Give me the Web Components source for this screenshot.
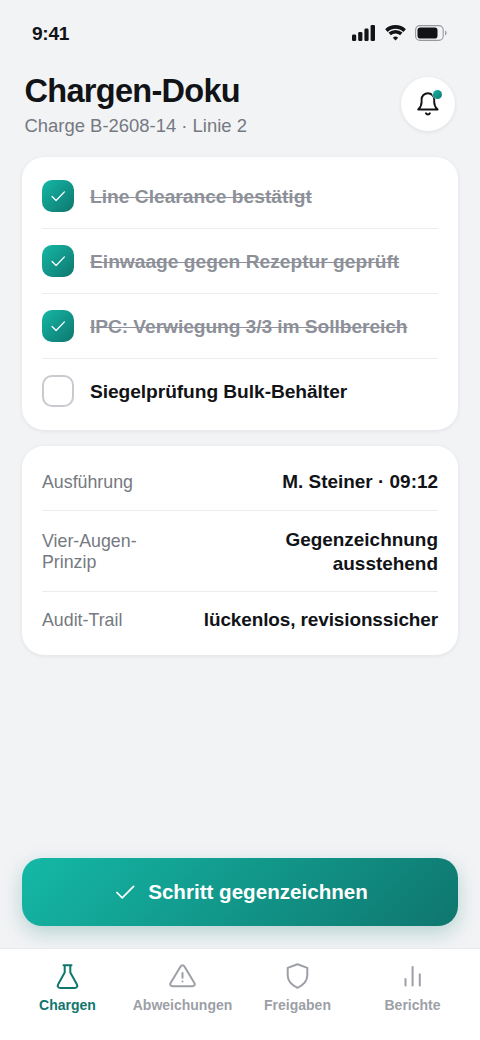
<!DOCTYPE html>
<html lang="de">
<head>
<meta charset="utf-8">
<title>Chargen-Doku</title>
<style>
html,body{margin:0;height:100%}
body{background:#f2f3f5;color:#111317;font-family:"Liberation Sans",Arial,sans-serif;overflow:hidden}
</style>
</head>
<body>
<batch-app></batch-app>
<script>
const define = (name, html) => {
  const t = document.createElement('template');
  t.innerHTML = html;
  customElements.define(name, class extends HTMLElement {
    constructor() {
      super();
      this.attachShadow({ mode: 'open' }).append(t.content.cloneNode(true));
    }
  });
};

define('status-bar', `
<style>
:host{display:flex;justify-content:space-between;align-items:center;height:66px;padding:0 33px 0 32px;box-sizing:border-box}
b{font-size:19.2px;line-height:22px;letter-spacing:-.3px;padding-top:1px}
.icons{display:flex;align-items:center}
svg{display:block}
</style>
<b>9:41</b>
<div class="icons">
<svg width="24" height="16" viewBox="0 0 24 16" fill="#111317"><rect x="0" y="9.6" width="4.2" height="6.4" rx="1.3"/><rect x="6.2" y="7" width="4.2" height="9" rx="1.3"/><rect x="12.4" y="3.6" width="4.2" height="12.4" rx="1.3"/><rect x="18.6" y="0" width="4.4" height="16" rx="1.3"/></svg>
<svg style="margin-left:9px" width="21" height="16" viewBox="0 0 21 16"><path d="M1.4 5.6a13.2 13.2 0 0 1 18.2 0" stroke="#111317" stroke-width="3.7" fill="none"/><path d="M4.7 8.9a8.6 8.6 0 0 1 11.6 0" stroke="#111317" stroke-width="3.5" fill="none"/><path d="M10.5 15.5l-2.6-2.7a3.8 3.8 0 0 1 5.2 0z" fill="#111317"/></svg>
<svg style="margin-left:9px" width="32" height="16" viewBox="0 0 32 16"><rect x=".6" y=".6" width="27.6" height="14.8" rx="4.4" fill="none" stroke="#96989c" stroke-width="1.1"/><rect x="2.5" y="2.4" width="20" height="11.2" rx="2.8" fill="#111317"/><path d="M30 5.4c1.1.5 1.7 1.4 1.7 2.6s-.6 2.1-1.7 2.6z" fill="#a2a4a8"/></svg>
</div>`);

define('bell-button', `
<style>
:host{display:flex;align-items:center;justify-content:center;position:relative;width:54px;height:54px;border-radius:50%;background:#fff;box-shadow:0 1px 4px rgba(17,24,39,.09)}
i{position:absolute;left:31.5px;top:12.5px;width:9px;height:9px;border-radius:50%;background:linear-gradient(135deg,#14b8a6,#0f766e);box-shadow:0 0 0 .6px #fff}
</style>
<svg width="28" height="28" viewBox="0 0 28 28" fill="none" stroke="#111317" stroke-width="1.9" stroke-linecap="round" stroke-linejoin="round"><path d="M4.2 19.5C6.6 17.3 7.6 15 7.6 12V9.3a6.3 6.1 0 0 1 12.6 0V12c0 3 1 5.300 3.400 7.500z"/><path d="M11.9 23.3c.8 1.500 3.200 1.500 4 0"/></svg><i></i>`);

define('page-header', `
<style>
:host{display:flex;justify-content:space-between;align-items:flex-start;padding:7px 25px 0 24.5px;height:84px;box-sizing:content-box}
h1{margin:0;font-size:32.5px;line-height:37px;letter-spacing:-.7px}
p{margin:5px 0 0;font-size:18.45px;line-height:22px;color:#757981}
bell-button{margin-top:4px}
</style>
<div><h1><slot name="title"></slot></h1><p><slot></slot></p></div>
<bell-button></bell-button>`);

define('info-card', `
<style>:host{display:block;margin:0 22px 16px;padding:7px 20px 6px;border-radius:22px;background:#fff;box-shadow:0 1px 4px rgba(17,24,39,.08)}</style>
<slot></slot>`);

define('check-row', `
<style>
:host{display:flex;align-items:center;gap:16px;height:65px;box-sizing:border-box;border-bottom:1px solid #ececef;font-size:19.2px;font-weight:bold}
:host(:last-child){border-bottom:0;height:64px;margin-bottom:1px}
.box{width:32px;height:32px;box-sizing:border-box;border-radius:10px;border:2px solid #c9cad0;display:flex;align-items:center;justify-content:center;flex:none}
.text{padding-top:1px}
svg{display:none}
:host([done]) .text{padding-top:2px}
:host([tight]) .text{letter-spacing:-.07px}
:host([done]) .box{border:0;background:linear-gradient(135deg,#14b8a6,#0f766e)}
:host([done]) svg{display:block}
:host([done]) .text{color:#8d9098;text-decoration:line-through;text-decoration-thickness:1.3px}
</style>
<span class="box"><svg width="16" height="16" viewBox="0 0 16 16" fill="none" stroke="#fff" stroke-width="1.3" stroke-linecap="round" stroke-linejoin="round"><path d="M2.1 8.5l4 4L14.4 3.9"/></svg></span><span class="text"><slot></slot></span>`);

define('detail-row', `
<style>
:host{display:flex;align-items:center;justify-content:space-between;padding:17px 0 16px;border-bottom:1px solid #ececef}
:host([narrow]){padding:17px 0 15px}
:host(:last-child){border-bottom:0;padding:16px 0 17px}
.label{max-width:110px;font-size:17.8px;line-height:21px;color:#757981}
.value{max-width:240px;font-size:18.95px;line-height:24px;font-weight:bold;text-align:right}
:host(:last-child) .value{letter-spacing:-.1px}
:host([narrow]) .value{max-width:180px}
</style>
<span class="label"><slot name="label"></slot></span><span class="value"><slot></slot></span>`);

define('primary-button', `
<style>
:host{display:flex;align-items:center;justify-content:center;gap:12px;height:68px;margin:auto 22px 22px;border-radius:20px;color:#fff;font-size:20.6px;font-weight:bold;background:linear-gradient(135deg,#14b8a6,#0f766e);box-shadow:0 7px 20px rgba(15,118,110,.26)}
</style>
<svg width="24" height="24" viewBox="0 0 24 24" fill="none" stroke="#fff" stroke-width="1.7" stroke-linecap="round" stroke-linejoin="round"><path d="M4.9 12.500l5.300 5.300L21.600 6.400"/></svg><span><slot></slot></span>`);

define('tab-item', `
<style>
:host{display:flex;flex-direction:column;align-items:center;gap:7px;flex:1 1 0;min-width:0;color:#9c9fa6;font-size:14px;line-height:16px;font-weight:bold;white-space:nowrap}
:host([active]){color:#0f766e}
::slotted(svg){display:block;width:28px;height:28px;fill:none;stroke:currentColor;stroke-width:2;stroke-linecap:round;stroke-linejoin:round}
</style>
<slot name="icon"></slot><span><slot></slot></span>`);

define('tab-bar', `
<style>:host{display:flex;height:92px;box-sizing:border-box;padding:13px 10px 0;border-top:1px solid #e9eaed;background:#fff}</style>
<slot></slot>`);

define('batch-app', `
<style>:host{display:flex;flex-direction:column;width:480px;height:1040px;overflow:hidden}</style>
<status-bar></status-bar>
<page-header><span slot="title">Chargen-Doku</span>Charge B-2608-14 · Linie 2</page-header>
<info-card>
<check-row done>Line Clearance bestätigt</check-row>
<check-row done>Einwaage gegen Rezeptur geprüft</check-row>
<check-row done tight>IPC: Verwiegung 3/3 im Sollbereich</check-row>
<check-row tight>Siegelprüfung Bulk-Behälter</check-row>
</info-card>
<info-card>
<detail-row><span slot="label">Ausführung</span>M. Steiner · 09:12</detail-row>
<detail-row narrow><span slot="label">Vier-Augen-Prinzip</span>Gegenzeichnung ausstehend</detail-row>
<detail-row><span slot="label">Audit-Trail</span>lückenlos, revisionssicher</detail-row>
</info-card>
<primary-button>Schritt gegenzeichnen</primary-button>
<tab-bar>
<tab-item active><svg slot="icon" viewBox="0 0 28 28"><path d="M9.5 3.2h8M10.7 3.2v7.3L4.300 21.900c-1.300 2.300-.2 4.200 2.200 4.200h14c2.400 0 3.500-1.900 2.200-4.200L16.300 10.500V3.200"/></svg>Chargen</tab-item>
<tab-item><svg slot="icon" viewBox="0 0 28 28"><path d="M11.700 4.300 1.600 21.100c-.9 1.600.1 3.200 1.900 3.200h20c1.800 0 2.800-1.600 1.900-3.200L15.300 4.300c-.9-1.400-2.700-1.400-3.600 0zM13.500 11v4.700M13.500 19.400v.1"/></svg>Abweichungen</tab-item>
<tab-item><svg slot="icon" viewBox="0 0 28 28"><path d="M13.500 2.300l9.800 3.600v7.400c0 5.800-4 9.800-9.800 12.500-5.800-2.700-9.800-6.700-9.800-12.500V5.900z"/></svg>Freigaben</tab-item>
<tab-item><svg slot="icon" viewBox="0 0 28 28"><path d="M6.500 17v6.600M13.600 5v18.600M20.800 12.200v11.400"/></svg>Berichte</tab-item>
</tab-bar>`);
</script>
</body>
</html>
